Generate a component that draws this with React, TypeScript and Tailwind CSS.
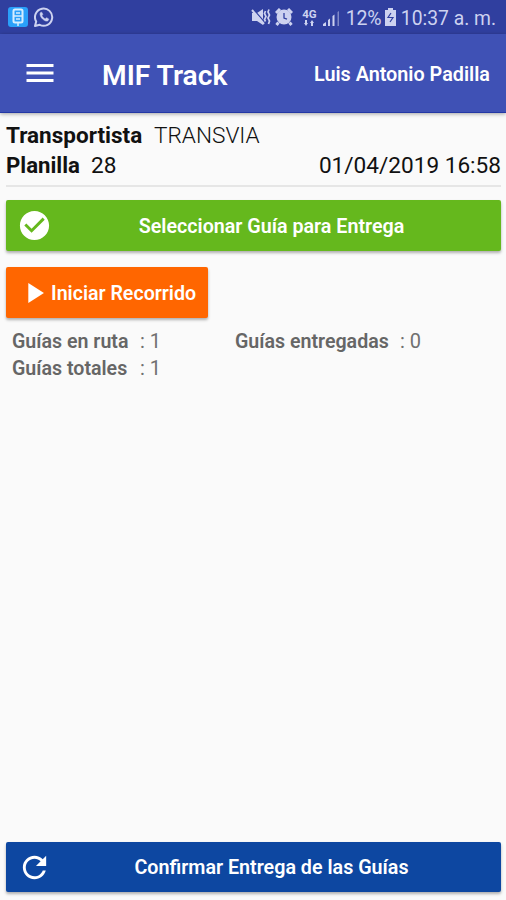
import type { ReactNode } from "react";

function Icon({ d, className }: { d: string; className: string }) {
  return (
    <svg viewBox="0 0 24 24" fill="currentColor" className={`shrink-0 ${className}`}>
      <path d={d} />
    </svg>
  );
}

const CHECK_CIRCLE =
  "M12 2C6.48 2 2 6.48 2 12s4.48 10 10 10 10-4.48 10-10S17.52 2 12 2zm-2 15l-5-5 1.41-1.41L10 14.17l7.59-7.59L19 8l-9 9z";
const REFRESH =
  "M17.65 6.35C16.2 4.9 14.21 4 12 4c-4.42 0-7.99 3.58-7.99 8s3.57 8 7.99 8c3.73 0 6.84-2.55 7.73-6h-2.08c-.82 2.33-3.04 4-5.65 4-3.31 0-6-2.69-6-6s2.69-6 6-6c1.66 0 3.14.69 4.22 1.78L13 11h7V4l-2.35 2.35z";
const PLAY = "M8 5v14l11-7z";
const MENU = "M3 18h18v-2H3v2zm0-5h18v-2H3v2zm0-7v2h18V6H3z";

function StatusBar() {
  return (
    <div className="flex h-[34px] shrink-0 items-center bg-[#303f9f] pl-2 pr-[10px] text-[#cdd2f0]">
      <svg viewBox="0 0 20 20" className="h-5 w-5 shrink-0">
        <rect width="20" height="20" rx="3" fill="#2aa0fa" />
        <rect x="5.5" y="2.5" width="9" height="13" rx="1.5" fill="none" stroke="#d5edff" strokeWidth="2" />
        <path d="M8 6h4M6 9h8M8 12h4M10 16v3" stroke="#d5edff" strokeWidth="1.5" />
      </svg>
      <svg viewBox="0 0 20 20" fill="none" stroke="currentColor" className="ml-[6px] h-5 w-5 shrink-0">
        <path d="M1 19l1.2-4.5A8.6 8.6 0 1 1 5.7 17.8z" strokeWidth="2" strokeLinejoin="round" />
        <path d="M6.2 6c.6-1 1.5-1.1 1.9-.2l.7 1.7-.9 1.3c.8 1.5 1.8 2.4 3.3 3.1l1.2-1.2 2 1c.7.4.1 1.7-.8 2.2-1.1.6-3.2-.1-5-1.8S5.5 7.5 6.2 6z" fill="currentColor" strokeWidth=".5" />
      </svg>
      <div className="ml-auto flex items-center">
        <svg viewBox="0 0 20 18" className="h-[18px] w-5">
          <path d="M1 5h5L12 1v16l-6-4H1z" fill="currentColor" />
          <path d="M2 1l13 15" stroke="#303f9f" strokeWidth="1.5" />
          <path d="M1 2l12 14" stroke="currentColor" strokeWidth="2" />
          <path d="M14.5 3l-1 2.5 1.500 3-1.500 3 1 2M18 1.500L17 4l1.500 3L17 10l1.500 3-1 3" stroke="currentColor" strokeWidth="1.700" fill="none" />
        </svg>
        <svg viewBox="0 0 18 18" className="ml-1 h-[18px] w-[18px]">
          <circle cx="9" cy="9" r="7.5" fill="currentColor" />
          <path d="M1 5L5 1M13 1l4 4M3.5 14.5L1.5 17M14.5 14.5l2 2.5" stroke="currentColor" strokeWidth="3" />
          <path d="M9 5V10l3 1.2" fill="none" stroke="#303f9f" strokeWidth="1.3" />
        </svg>
        <div className="ml-[9px] flex w-[15px] flex-col items-center">
          <span className="text-[11.5px] leading-[10px] font-bold">4G</span>
          <svg viewBox="0 0 10 6" className="mt-px h-[6px] w-[10px]" fill="currentColor">
            <path d="M0 3h1V0h2v3h1L2 6zM6 3h1v3h2V3h1L8 0z" />
          </svg>
        </div>
        <svg viewBox="0 0 17 17" className="ml-[6px] h-[17px] w-[17px]" fill="currentColor">
          <path d="M0 17v-2l3-2v4zM5 17v-6l2-1.5V17zM9.5 17V7l2-1.5V17z" />
          <path d="M14.5 3l1.5-1v15h-1.5z" opacity=".5" />
        </svg>
        <span className="ml-[6px] mt-[3px] w-[38px] text-[19.5px] leading-6 tracking-[-0.2px]">12%</span>
        <svg viewBox="0 0 13 18" className="h-[18px] w-[13px]">
          <path d="M4 0h5v2h3v16H1V2h3z" fill="currentColor" />
          <path d="M7 5l-3 4.5h5L6 14" fill="none" stroke="#303f9f" strokeWidth="1.2" />
        </svg>
        <span className="ml-[4px] mt-[3px] text-[19.3px] leading-6">10:37 a. m.</span>
      </div>
    </div>
  );
}

function BarButton({ icon, className, children }: { icon: ReactNode; className: string; children: ReactNode }) {
  return (
    <button className={`flex w-full shrink-0 items-center rounded-[2px] pl-[11px] pr-[10px] text-[19.7px] font-semibold text-white shadow-[0_2px_3px_rgba(0,0,0,0.3)] ${className}`}>
      {icon}
      <span className="mt-[2px] flex-1 text-center">{children}</span>
    </button>
  );
}

function Stat({ label, value, labelWidth }: { label: string; value: number; labelWidth: string }) {
  return (
    <div className="flex items-baseline">
      <span className={`text-[19.6px] font-semibold text-[#666] ${labelWidth}`}>{label}</span>
      <span>: {value}</span>
    </div>
  );
}

export default function App() {
  return (
    <div className="flex h-[900px] w-[506px] flex-col overflow-hidden bg-[#fafafa] font-[Roboto,sans-serif] whitespace-nowrap">
      <StatusBar />
      <header className="flex h-[79px] shrink-0 items-center border-b border-[#2438a5] bg-[#3f51b5] pl-[22px] pr-4 text-white shadow-[0_1px_4px_rgba(0,0,0,0.35)]">
        <Icon d={MENU} className="h-9 w-9" />
        <h1 className="ml-[44px] mt-[6px] text-[28.2px] leading-8 font-semibold">MIF Track</h1>
        <span className="ml-auto mt-[4px] text-[19.8px] font-semibold">Luis Antonio Padilla</span>
      </header>
      <main className="flex flex-1 flex-col pb-[8px] pl-[6px] pr-[5px] pt-[7px]">
        <section className="border-b-2 border-[#e6e6e6] pb-[5px] text-[22.6px] leading-[30px] text-[#111]">
          <div className="flex h-[30px] items-baseline">
            <span className="w-[148px] text-[22.5px] font-bold">Transportista</span>
            <span className="font-light">TRANSVIA</span>
          </div>
          <div className="flex h-[30px] items-baseline">
            <span className="w-[85px] text-[22.2px] font-bold">Planilla</span>
            <span>28</span>
            <span className="ml-auto">01/04/2019 16:58</span>
          </div>
        </section>
        <div className="mt-[13px] flex">
          <BarButton className="h-[51px] bg-[#65b81d]" icon={<Icon d={CHECK_CIRCLE} className="h-[35px] w-[35px]" />}>
            Seleccionar Guía para Entrega
          </BarButton>
        </div>
        <button className="mt-[16px] flex h-[51px] w-[202px] shrink-0 items-center rounded-[2px] bg-[#ff6600] pl-[11px] text-[19.6px] font-semibold text-white shadow-[0_2px_3px_rgba(0,0,0,0.3)]">
          <Icon d={PLAY} className="h-[34px] w-[34px]" />
          <span className="mt-[3px]">Iniciar Recorrido</span>
        </button>
        <section className="mt-[10px] grid grid-cols-[223px_1fr] pl-[6px] text-[20px] leading-[27px] text-[#707070]">
          <Stat label="Guías en ruta" value={1} labelWidth="w-[128px]" />
          <Stat label="Guías entregadas" value={0} labelWidth="w-[165px]" />
          <Stat label="Guías totales" value={1} labelWidth="w-[128px]" />
        </section>
        <div className="mt-auto flex">
          <BarButton className="h-[50px] bg-[#0d47a1]" icon={<Icon d={REFRESH} className="h-[35px] w-[35px]" />}>
            Confirmar Entrega de las Guías
          </BarButton>
        </div>
      </main>
    </div>
  );
}
